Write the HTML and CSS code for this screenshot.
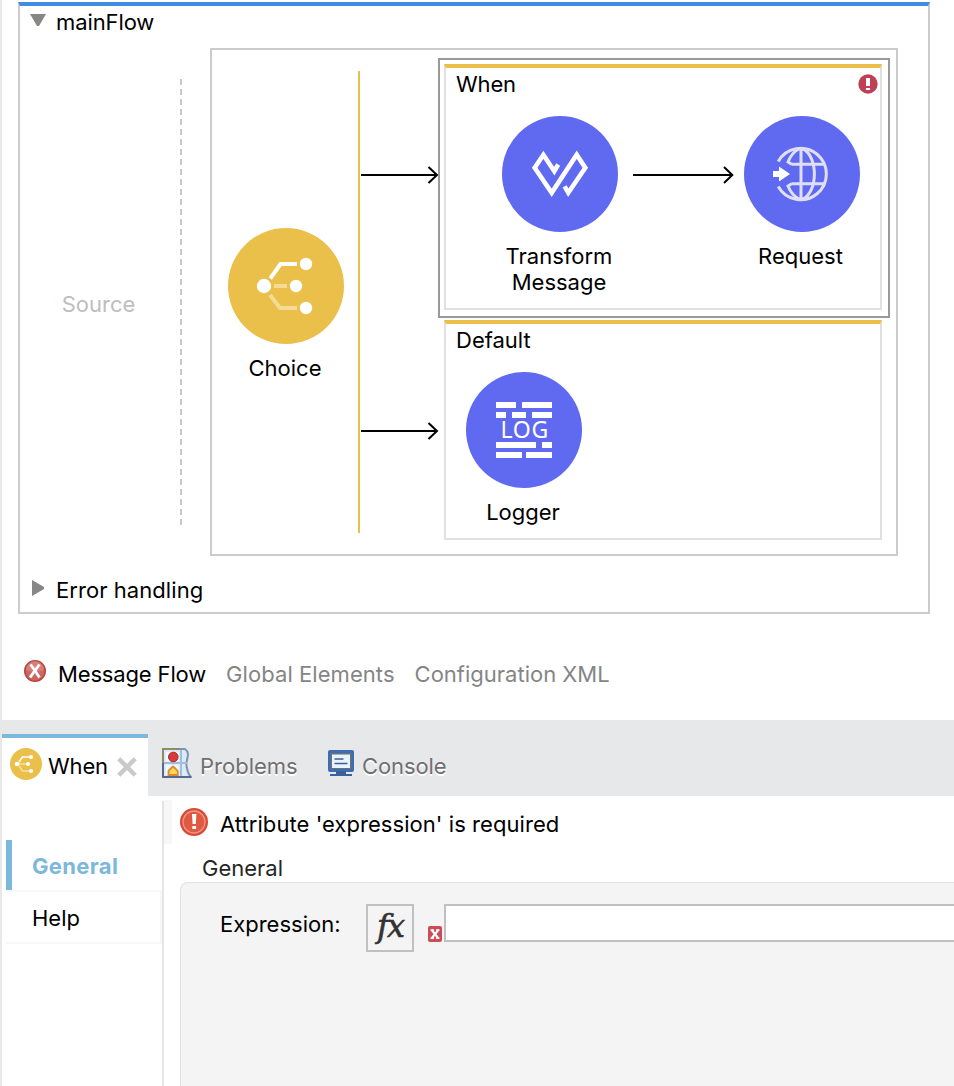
FILE: index.html
```html
<!DOCTYPE html>
<html lang="en">
<head>
<meta charset="utf-8">
<title>mainFlow</title>
<link rel="stylesheet" href="styles.css">
</head>
<body>
<div class="app">
  <main class="editor">
    <section class="flow">
      <header class="flow-head"><svg class="tri-down" width="16" height="12" viewBox="0 0 16 12"><path d="M0 0H16L9 12H7Z" fill="#868886"/></svg><span class="t-main">mainFlow</span></header>
      <div class="flow-body">
        <div class="source"><span class="t-source">Source</span></div>
        <svg class="dash" width="2" height="446"><path d="M1 0V446" stroke="#c8c8c8" stroke-width="2" stroke-dasharray="6 4"/></svg>
        <div class="choice-box">
          <div class="choice">
            <svg width="116" height="116" viewBox="0 0 116 116"><use href="#choice-icon"/></svg>
            <span class="label t-choice">Choice</span>
          </div>
          <div class="rail"></div>
          <div class="arrows">
            <svg width="80" height="20" viewBox="0 0 80 20"><use href="#short-arrow"/></svg>
            <svg width="80" height="20" viewBox="0 0 80 20"><use href="#short-arrow"/></svg>
          </div>
          <div class="routes">
            <div class="selected">
              <div class="route route-when">
                <div class="route-head"><span class="t-when">When</span>
                  <svg width="20" height="20" viewBox="0 0 20 20"><circle cx="10" cy="10" r="9.7" fill="#bf3f55"/><path d="M8 4H12V12H8ZM8 14H12V16H8Z" fill="#fff"/></svg>
                </div>
                <div class="nodes">
                  <div class="node">
                    <svg width="116" height="116" viewBox="0 0 116 116"><circle cx="58" cy="58" r="58" fill="#5f6af0"/><path d="M56.2 48.5L52.3 55.2L41.4 38.8L32.7 51.8L49.7 76.8L74.7 38.8L83.3 51.8L66.3 76.8L62.6 70.4" fill="none" stroke="#fff" stroke-width="4.6"/></svg>
                    <span class="label"><span class="t-transform">Transform</span><br><span class="t-message">Message</span></span>
                  </div>
                  <svg class="long-arrow" width="102" height="20" viewBox="0 0 102 20"><path d="M1 10H100M92 2L100.3 10L92 18" fill="none" stroke="#000" stroke-width="2"/></svg>
                  <div class="node">
                    <svg width="116" height="116" viewBox="0 0 116 116"><circle cx="58" cy="58" r="58" fill="#5f6af0"/>
                      <g fill="none" stroke="#dfdffb" stroke-width="3"><path d="M34.2 45.5A25.7 25.7 0 1 1 34.2 70.5M57 32.5V83.5M48 48.2H80M48 67.8H80M58 32.5C74.5 39 74.5 77 58 83.5M56 32.5Q48 36 44 46L48 48.5M56 83.5Q48 80 44 70L48 67.5"/></g>
                      <path d="M29 55H35V50.5L46 58L35 65.5V61H29Z" fill="#fff"/></svg>
                    <span class="label t-request">Request</span>
                  </div>
                </div>
              </div>
            </div>
            <div class="route route-default">
              <div class="route-head"><span class="t-default">Default</span></div>
              <div class="node">
                <svg width="116" height="116" viewBox="0 0 116 116"><circle cx="58" cy="58" r="58" fill="#5f6af0"/><path d="M30 30H50V36H30ZM56 30H86V36H56ZM30 40H40V46H30ZM46 40H60V46H46ZM66 40H86V46H66ZM30 70H70V76H30ZM76 70H86V76H76ZM30 80H56V86H30ZM60 80H86V86H60Z" fill="#fff"/><text x="34.5" y="66" class="log">LOG</text></svg>
                <span class="label t-logger">Logger</span>
              </div>
            </div>
          </div>
        </div>
      </div>
      <footer class="flow-foot"><svg width="12" height="16" viewBox="0 0 12 16"><path d="M0 0L12 7V9L0 16Z" fill="#868686"/></svg><span class="t-error">Error handling</span></footer>
    </section>
    <nav class="pages">
      <svg width="22" height="22" viewBox="0 0 22 22"><circle cx="11" cy="11" r="10.2" fill="#ce6560" stroke="#b8433e" stroke-width="1.6"/><path d="M2 10A9 9 0 0 1 20 10Q11 13 2 10" fill="#e09a96" opacity=".5"/><path d="M6.5 4.5C10 9 12 12 15.5 17.5M15.5 4.5C12 9 10 12 6 17.5" stroke="#fff" stroke-width="2.8" fill="none"/></svg>
      <span class="t-mflow">Message Flow</span><span class="off t-global">Global Elements</span><span class="off t-config">Configuration XML</span>
    </nav>
  </main>

  <nav class="tabs">
    <div class="tab tab-active">
      <svg width="32" height="32" viewBox="0 0 32 32"><circle cx="16" cy="16" r="16" fill="#eabf4a"/><path d="M8 16H17M9 18L12.5 23H20" fill="none" stroke="#f6dfa0" stroke-width="1.6"/><path d="M9 14L12.5 9H20" fill="none" stroke="#fff" stroke-width="1.6"/><g fill="#fff"><circle cx="7" cy="16" r="2.3"/><circle cx="18" cy="16" r="2.1"/><circle cx="21" cy="9" r="2.1"/><circle cx="21" cy="23" r="2.1"/></g></svg>
      <span class="t-when">When</span>
      <svg class="close" width="20" height="20" viewBox="0 0 20 20"><path d="M1.8 1.8L18.2 18.2M18.2 1.8L1.8 18.2" stroke="#c9c9c9" stroke-width="4.4"/></svg>
    </div>
    <div class="tab tab-problems">
      <svg width="30" height="30" viewBox="0 0 30 30"><path d="M1 1H23C30 6 22 13 25 20Q26 26 29 29H1Z" fill="#d9ecfb" stroke="#8291ae" stroke-width="2"/><path d="M1 30V1H17" fill="none" stroke="#918a60" stroke-width="2"/><path d="M1 15V29H29" fill="none" stroke="#58678e" stroke-width="2"/><path d="M2 15H25M19 2V28" stroke="#a3bedb" stroke-width="2"/><path d="M4 4H17V13H4ZM4 17H17V27H4Z" fill="#f4faff"/><circle cx="11.3" cy="9" r="4.8" fill="#d83b38" stroke="#ae2632"/><path d="M6.5 27V23Q7 22 11 18.5Q15 22 15.8 23V27Z" fill="#ffd451" stroke="#d88c35" stroke-width="1.8"/></svg>
      <span class="t-problems">Problems</span>
    </div>
    <div class="tab tab-console">
      <svg width="26" height="26" viewBox="0 0 26 26"><rect width="26" height="22" rx="2" fill="#3e6bb2"/><path d="M2.5 3H23.5V19H2.5Z" fill="#6b7179"/><path d="M4 4.5H22V18H4Z" fill="#e8f4ff"/><path d="M6.5 9H15.5M6.5 13.5H19.5" stroke="#435b91" stroke-width="1.6"/><path d="M8 21H18V24H24V26H2V24H8Z" fill="#3c609b"/></svg>
      <span class="t-console">Console</span>
    </div>
  </nav>

  <section class="details">
    <aside class="side">
      <div class="side-item side-active"><span class="t-genbold">General</span></div>
      <div class="side-item side-help"><span class="t-help">Help</span></div>
    </aside>
    <div class="grip"></div>
    <div class="form">
      <div class="alert">
        <svg width="28" height="28" viewBox="0 0 28 28"><circle cx="14" cy="14" r="14" fill="#db4a36"/><circle cx="14" cy="14" r="11" fill="#e05a43" stroke="#f09784" stroke-width="1.3"/><path d="M12 6H16.4L15.8 16H12.6ZM12.3 18H16.1V21H12.3Z" fill="#fff"/></svg>
        <span class="t-alert">Attribute 'expression' is required</span>
      </div>
      <div class="group-title"><span class="t-general">General</span></div>
      <div class="panel">
        <span class="field-name"><span class="t-expr">Expression:</span></span>
        <span class="fx"><i>fx</i></span>
        <svg class="field-error" width="14" height="16" viewBox="0 0 14 16"><rect width="14" height="16" rx="2" fill="#cc4b54"/><path d="M3.7 4L10.3 12.2M10.3 4L3.7 12.2" stroke="#fff" stroke-width="2.2"/><path d="M2.5 4H6M8 4H11.5M2.5 12.2H6M8 12.2H11.5" stroke="#fff" stroke-width="1.4"/></svg>
        <div class="input"></div>
      </div>
    </div>
  </section>
</div>

<svg class="defs" width="0" height="0">
  <symbol id="choice-icon" viewBox="0 0 116 116"><circle cx="58" cy="58" r="58" fill="#eabf4a"/><path d="M46 58H59M42 67L52 80H69" fill="none" stroke="#f4dc97" stroke-width="4"/><path d="M42.3 50.5L52.5 36H69" fill="none" stroke="#fff" stroke-width="4"/><g fill="#fff"><circle cx="36" cy="58" r="7.2"/><circle cx="68" cy="58" r="6.2"/><circle cx="78" cy="36" r="6.2"/><circle cx="78" cy="80" r="6.2"/></g></symbol>
  <symbol id="short-arrow" viewBox="0 0 80 20"><path d="M1 10H77M68.5 2L77 10L68.5 18" fill="none" stroke="#000" stroke-width="2"/></symbol>
</svg>
</body>
</html>
```
FILE: styles.css
```css
* { box-sizing: border-box; }
body { margin: 0; background: #fff; color: #000; font: 22px/26px Inter, "Liberation Sans", sans-serif; }
svg { display: block; flex: none; }
span { white-space: nowrap; }
.defs { position: absolute; }
.app { width: 954px; height: 1086px; overflow: hidden; border-left: 2px solid #e8e8e8; display: flex; flex-direction: column; }

.editor { height: 720px; flex: none; padding: 2px 24px 0 16px; }
.flow { height: 612px; border: 2px solid #ccc; border-top: 4px solid #418ce5; display: flex; flex-direction: column; }
.flow-head { height: 42px; flex: none; display: flex; align-items: flex-start; padding: 3px 0 0 10px; gap: 10px; }
.tri-down { margin-top: 5px; }
.t-main { letter-spacing: -.1px; }
.flow-body { display: flex; height: 508px; flex: none; }
.source { width: 160px; padding: 243px 3px 0 0; text-align: center; color: #bebebe; }
.dash { margin-top: 31px; }
.choice-box { margin-left: 28px; width: 688px; border: 2px solid #ccc; display: flex; }
.choice { margin-left: 16px; width: 116px; padding-top: 178px; display: flex; flex-direction: column; }
.label { display: block; text-align: center; margin-top: 11px; padding-right: 2px; }
.t-request { padding-right: 3px; }
.rail { margin: 21px 0 0 14px; width: 2px; height: 462px; background: #eabf4a; }
.arrows { width: 78px; padding-top: 115px; display: flex; flex-direction: column; gap: 236px; }
.routes { width: 452px; padding-top: 8px; }
.selected { height: 260px; border: 2px solid #999; padding: 4px; }
.route { width: 438px; border: 2px solid #e0e0e0; border-top: 4px solid #eabf4a; }
.route-when { height: 246px; }
.route-default { height: 220px; margin: 2px 0 0 6px; }
.route-head { height: 48px; display: flex; justify-content: space-between; padding: 3px 2px 0 10px; }
.route-head svg { margin-top: 3px; }
.t-when { letter-spacing: -.15px; }
.nodes { display: flex; padding-left: 56px; }
.node { width: 116px; }
.route-default .node { margin-left: 20px; }
.long-arrow { margin: 49px 10px 0 14px; width: 102px; }
.log { font: 23px "Noto Sans", sans-serif; letter-spacing: .7px; fill: #fff; }
.flow-foot { display: flex; padding: 21px 0 0 12px; gap: 12px; }
.flow-foot svg { margin-top: 3px; }
.t-error { letter-spacing: .06px; }
.pages { display: flex; padding: 46px 0 0 6px; }
.pages svg { margin-right: 12px; }
.pages span { margin: 1px 20px 0 0; }
.pages .t-mflow { letter-spacing: -.15px; }
.pages .t-global { letter-spacing: .06px; }
.off { color: #858585; }

.tabs { height: 76px; flex: none; background: #e7e8ea; display: flex; padding-top: 14px; }
.tab { height: 62px; display: flex; color: #707070; text-shadow: 0 2px 0 #fff; }
.tab span { margin-top: 19px; }
.tab-active { width: 146px; background: #fff; border-top: 4px solid #7cb7dc; color: #000; text-shadow: none; padding: 10px 0 0 8px; }
.tab-active span { flex: none; margin: 5px 0 0 6px; width: 69px; }
.tab-active .close { margin: 9px 0 0; }
.tab-problems { padding-left: 14px; width: 180px; }
.tab-problems svg { margin: 14px 8px 0 0; }
.tab-console svg { margin: 16px 8px 0 0; }
.t-console { letter-spacing: -.1px; }

.details { display: flex; flex: 1; padding-top: 4px; }
.side { width: 162px; margin-top: 1px; padding: 39px 0 0 4px; border-right: 2px solid #e5e5e5; }
.side-item { height: 50px; padding: 13px 0 0 20px; }
.side-active { border-left: 6px solid #7cb7dc; color: #7cb7dc; font-weight: 700; letter-spacing: .35px; }
.side-help { height: 54px; padding: 13px 0 0 26px; border: 2px solid #f7f7f7; border-left: 0; }
.grip { width: 8px; height: 44px; background: #f7f7f7; }
.form { flex: 1; padding: 8px 0 0 8px; display: flex; flex-direction: column; }
.alert { display: flex; gap: 12px; height: 46px; letter-spacing: .06px; }
.alert span { margin-top: 3px; }
.group-title { height: 28px; padding: 1px 0 0 22px; color: #262626; }
.panel { flex: 1; background: #f4f4f4; border: solid #e2e2e2; border-width: 1px 0 0 1px; border-radius: 8px 0 0 0; padding: 21px 0 0 39px; display: flex; align-items: flex-start; }
.field-name { width: 146px; padding-top: 7px; }
.fx { width: 48px; height: 48px; border: 2px solid #c0c0c0; text-align: center; font: 32px/40px "DejaVu Serif", serif; letter-spacing: -2px; color: #333; -webkit-text-stroke: .6px #333; }
.field-error { margin: 22px 2px 0 14px; }
.input { flex: 1; height: 38px; border: 2px solid #c0c0c0; border-right: 0; background: #fff; }
```
